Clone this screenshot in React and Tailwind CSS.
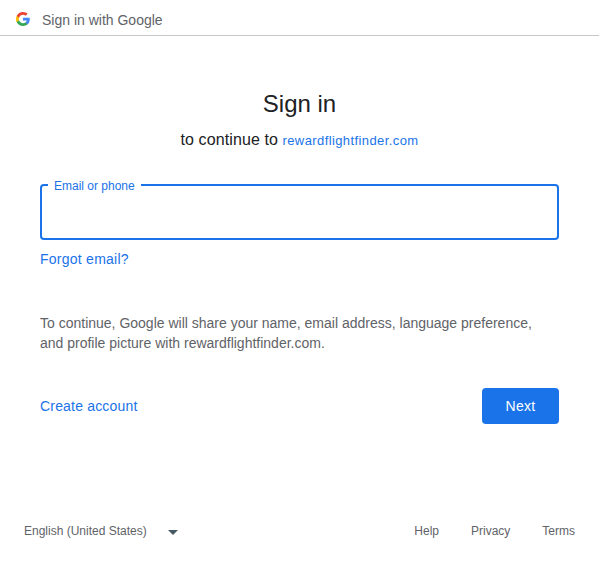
export default function App() {
  return (
    <div className="flex h-[570px] w-[599px] flex-col bg-white font-['Liberation_Sans',Arial,sans-serif] text-[#202124]">
      <header className="flex h-9 items-center border-b border-[#c7c7c7] pl-4 pb-px pt-1">
        <svg viewBox="2 2 44 44" className="h-[14px] w-[14px]">
          <path fill="#4285F4" d="M45.12 24.5c0-1.56-.14-3.06-.4-4.5H24v8.51h11.84c-.51 2.75-2.06 5.08-4.39 6.64v5.52h7.11c4.16-3.83 6.56-9.47 6.56-16.17z" />
          <path fill="#34A853" d="M24 46c5.94 0 10.92-1.97 14.56-5.33l-7.11-5.52c-1.97 1.32-4.49 2.1-7.45 2.1-5.73 0-10.58-3.87-12.31-9.07H4.34v5.7C7.96 41.07 15.4 46 24 46z" />
          <path fill="#FBBC05" d="M11.69 28.18C11.25 26.86 11 25.45 11 24s.25-2.86.69-4.18v-5.7H4.34C2.85 17.09 2 20.45 2 24c0 3.55.85 6.91 2.34 9.88l7.35-5.7z" />
          <path fill="#EA4335" d="M24 10.75c3.23 0 6.13 1.11 8.41 3.29l6.31-6.31C34.91 4.18 29.93 2 24 2 15.4 2 7.96 6.93 4.34 14.12l7.35 5.7c1.73-5.2 6.58-9.07 12.31-9.07z" />
        </svg>
        <span className="ml-3 pt-0.5 text-sm leading-5 text-[#5f6368]">Sign in with Google</span>
      </header>
      <main className="flex flex-col px-10 pt-[52px]">
        <h1 className="text-center text-2xl leading-8">Sign in</h1>
        <p className="mt-2 text-center text-base leading-6 tracking-[0.1px]">
          to continue to <a className="text-[13px] tracking-[0.4px] text-[#1a73e8]">rewardflightfinder.com</a>
        </p>
        <fieldset className="mt-6 h-[63px] rounded-[4px] border-2 border-[#1a73e8] pl-1.5">
          <legend className="px-1.5 pt-0.5 text-xs leading-[14px] text-[#1a73e8]">Email or phone</legend>
          <input className="w-full outline-none" />
        </fieldset>
        <a className="mt-[9px] text-sm leading-5 tracking-[0.25px] text-[#1a73e8]">Forgot email?</a>
        <p className="mt-11 text-sm leading-5 text-[#5f6368]">
          To continue, Google will share your name, email address, language preference,
          <br />
          and profile picture with rewardflightfinder.com.
        </p>
        <div className="mt-[35px] flex items-center justify-between">
          <a className="text-sm tracking-[0.18px] text-[#1a73e8]">Create account</a>
          <button className="h-9 w-[77px] rounded-[4px] bg-[#1a73e8] text-sm tracking-[0.25px] text-white">Next</button>
        </div>
      </main>
      <footer className="mt-[99px] flex items-center justify-between px-6 text-xs leading-4 text-[#5f6368]">
        <div className="flex items-center">
          English (United States)
          <svg viewBox="0 0 10 5" className="ml-[21px] mt-0.5 h-[5px] w-[10px]">
            <path fill="#455a64" d="M0 0h10L5 5z" />
          </svg>
        </div>
        <nav className="flex gap-8">
          <a>Help</a>
          <a>Privacy</a>
          <a>Terms</a>
        </nav>
      </footer>
    </div>
  );
}
